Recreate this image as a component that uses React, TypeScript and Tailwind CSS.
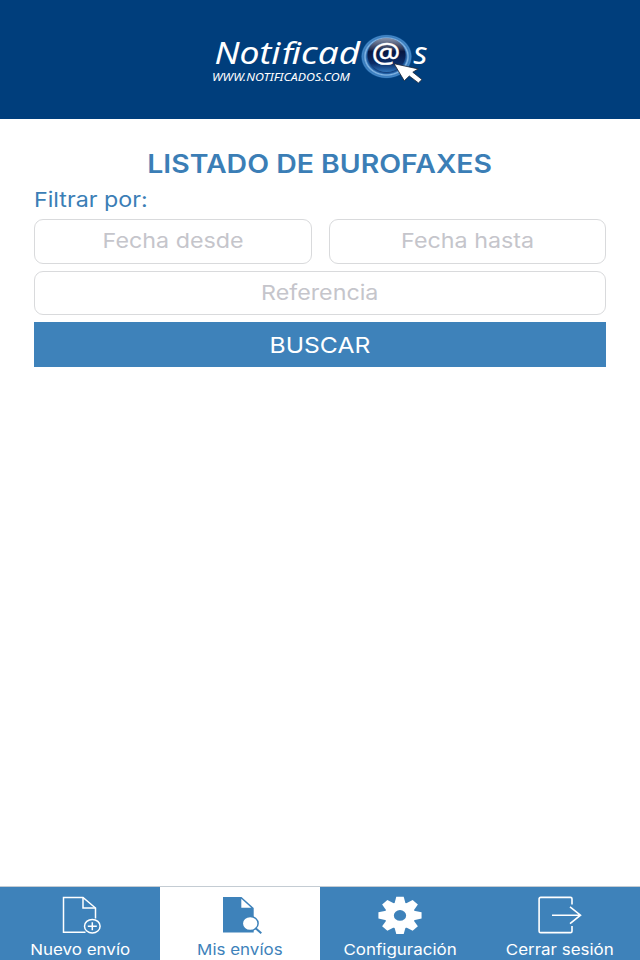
import type { ReactNode } from "react";

export default function App() {
  return (
    <div className="flex h-[960px] w-[640px] flex-col overflow-hidden bg-white font-['Inter',sans-serif]">
      <header className="flex h-[119px] shrink-0 justify-center bg-[#003e7c] pt-[28px]">
        <Logo />
      </header>

      <main className="flex flex-1 flex-col px-[34px] pt-[29px] text-[#3b7eb6]">
        <h1 className="flex h-[31px] items-center justify-center pt-[2px] text-[25px] font-semibold">
          <span className="inline-block scale-x-[1.137] whitespace-nowrap">LISTADO DE BUROFAXES</span>
        </h1>
        <p className="mt-[6px] h-[30px] text-[20.5px] leading-[30px]">
          <span className="inline-block origin-left scale-x-[1.135]">Filtrar por:</span>
        </p>
        <div className="mt-[4px] grid grid-cols-2 gap-[17px]">
          <Field label="Fecha desde" />
          <Field label="Fecha hasta" />
        </div>
        <div className="mt-[7px]">
          <Field label="Referencia" />
        </div>
        <button className="mt-[7px] flex h-[44.5px] items-center justify-center bg-[#3e82ba] pt-[2px] text-[22px] text-white">
          <span className="inline-block scale-x-[1.12]">BUSCAR</span>
        </button>
      </main>

      <nav className="grid h-[74px] shrink-0 grid-cols-4 border-t border-[#c4ccd3]">
        <Tab label="Nuevo envío">
          <NewDocIcon />
        </Tab>
        <Tab label="Mis envíos" active>
          <SearchDocIcon />
        </Tab>
        <Tab label="Configuración">
          <GearIcon />
        </Tab>
        <Tab label="Cerrar sesión">
          <ExitIcon />
        </Tab>
      </nav>
    </div>
  );
}

function Field({ label }: { label: string }) {
  return (
    <div className="flex h-[44.5px] items-center justify-center rounded-[9px] border-[1.5px] border-[#d9dadc] pt-px text-[20.5px] text-[#c5c5cb]">
      <span className="inline-block scale-x-[1.135] whitespace-nowrap">{label}</span>
    </div>
  );
}

function Tab({ label, active, children }: { label: string; active?: boolean; children: ReactNode }) {
  return (
    <div className={`flex flex-col items-center pt-[8px] ${active ? "bg-white text-[#3e82ba]" : "bg-[#3e82ba] text-white"}`}>
      {children}
      <span className="mt-[5px] inline-block scale-x-[1.13] whitespace-nowrap text-[15px] leading-[20px]">{label}</span>
    </div>
  );
}

function Logo() {
  return (
    <svg width="230" height="62" viewBox="205 28 230 62" className="font-['Noto_Sans',sans-serif]" fill="white">
      <defs>
        <radialGradient id="ring">
          <stop offset="0.72" stopColor="#123f7c" />
          <stop offset="0.78" stopColor="#2463a8" />
          <stop offset="0.84" stopColor="#86b8e6" />
          <stop offset="0.9" stopColor="#3a7cbd" />
          <stop offset="0.95" stopColor="#4287c6" />
          <stop offset="1" stopColor="#0b4a8d" />
        </radialGradient>
        <linearGradient id="disc" x1="0" y1="0" x2="0" y2="1">
          <stop offset="0" stopColor="#8b96ad" />
          <stop offset="0.3" stopColor="#323d5d" />
          <stop offset="0.4" stopColor="#071742" />
          <stop offset="0.75" stopColor="#0b2d68" />
          <stop offset="1" stopColor="#2f74ba" />
        </linearGradient>
      </defs>
      {/* the f has no descender, so it is the upright glyph slanted by hand */}
      <text x="214.5" y="63.5" fontSize="30" fontStyle="italic" textLength="66" lengthAdjust="spacingAndGlyphs">
        Noti
      </text>
      <text transform="translate(280 63.5) skewX(-12)" fontSize="30" textLength="11.5" lengthAdjust="spacingAndGlyphs">
        f
      </text>
      <text x="291.5" y="63.5" fontSize="30" fontStyle="italic" textLength="68.5" lengthAdjust="spacingAndGlyphs">
        icad
      </text>
      <text x="212" y="81.3" fontSize="10" fontStyle="italic" textLength="138" lengthAdjust="spacingAndGlyphs">
        WWW.NOTIFICADOS.COM
      </text>
      <ellipse cx="386.5" cy="56.5" rx="25.5" ry="22" fill="url(#ring)" />
      <ellipse cx="386.5" cy="55" rx="19" ry="17" fill="url(#disc)" />
      <text x="371.5" y="63.3" fontSize="28" textLength="29" lengthAdjust="spacingAndGlyphs" stroke="white" strokeWidth="0.3">
        @
      </text>
      <text x="413.5" y="63.5" fontSize="30" fontStyle="italic" textLength="14" lengthAdjust="spacingAndGlyphs">
        s
      </text>
      <path d="M394 63.7 L418.2 68.9 L412.8 72.2 L422 79.6 L418.4 82.9 L409.3 76 L404.3 80.8 Z" stroke="#1d2433" strokeWidth="0.8" />
    </svg>
  );
}

function NewDocIcon() {
  return (
    <svg width="44" height="40" viewBox="0 0 44 40" fill="none" stroke="currentColor" strokeWidth="1.5">
      <path d="M27.5 37.3H5.5V2.5H25L37.5 13V23.5" />
      <path d="M25 2.5V13H37.5" />
      <ellipse cx="34.3" cy="31.2" rx="7.8" ry="6.8" />
      <path d="M34.3 27.2V35.2M29.8 31.2H38.8" />
    </svg>
  );
}

function SearchDocIcon() {
  return (
    <svg width="44" height="40" viewBox="0 0 44 40" fill="none" stroke="currentColor" strokeWidth="1.5">
      <path d="M5 2H23.5L35.7 13V37.5H5Z" fill="currentColor" stroke="none" />
      <path d="M23.3 3.7V12.7H33.2Z" fill="white" stroke="none" />
      <ellipse cx="32.2" cy="28.5" rx="7.9" ry="7" fill="white" />
      <path d="M37.3 33L43.3 38.3" strokeWidth="2" />
    </svg>
  );
}

function GearIcon() {
  const teeth = [0, 45, 90, 135, 180, 225, 270, 315];
  return (
    <svg width="44" height="40" viewBox="-22 -20 44 40" fill="currentColor">
      <g transform="translate(0 0.4) scale(1.16 1)">
        {teeth.map((angle) => (
          <path key={angle} d="M-5 -11L-3.2 -18.6H3.2L5 -11Z" transform={`rotate(${angle})`} />
        ))}
        <path fillRule="evenodd" d="M0 -13.2A13.2 13.2 0 1 1 0 13.2A13.2 13.2 0 1 1 0 -13.2ZM0 -5.3A5.3 5.3 0 1 0 0 5.3A5.3 5.3 0 1 0 0 -5.3Z" />
      </g>
    </svg>
  );
}

function ExitIcon() {
  return (
    <svg width="44" height="40" viewBox="0 0 44 40" fill="none" stroke="currentColor" strokeWidth="1.6">
      <path d="M34 9.5V3.8Q34 2.4 32.4 2.4H2.7Q1.1 2.4 1.1 3.8V36.2Q1.1 37.6 2.7 37.6H32.4Q34 37.6 34 36.2V31" />
      <path d="M14 20.2H42M32 11.8L42.5 20.2L32 28.6" />
    </svg>
  );
}
